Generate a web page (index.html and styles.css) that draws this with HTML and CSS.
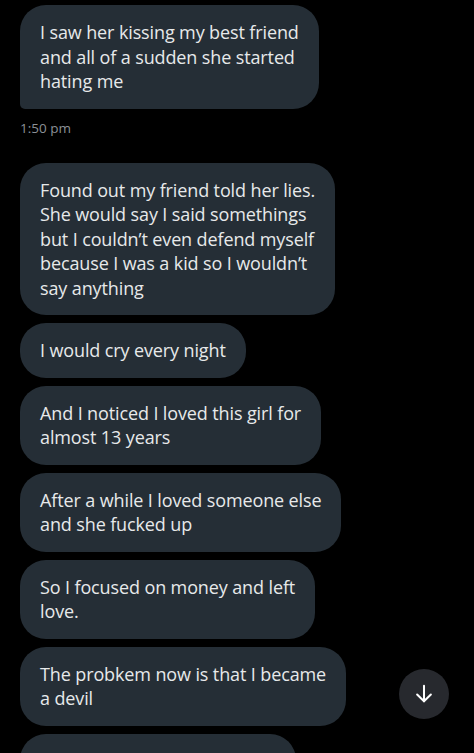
FILE: index.html
```html
<!DOCTYPE html>
<html lang="en">
<head>
    <meta charset="UTF-8">
    <meta name="viewport" content="width=device-width, initial-scale=1.0">
    <title>Messages</title>
    <link rel="stylesheet" href="styles.css">
</head>
<body>
    <div class="chat">
        <div class="group">
            <div class="bubble last">I saw her kissing my best friend<br>and all of a sudden she started<br>hating me</div>
            <div class="time">1:50 pm</div>
        </div>

        <div class="group">
            <div class="bubble">Found out my friend told her lies.<br>She would say I said somethings<br>but I couldn’t even defend myself<br>because I was a kid so I wouldn’t<br>say anything</div>
            <div class="bubble">I would cry every night</div>
            <div class="bubble">And I noticed I loved this girl for<br>almost 13 years</div>
            <div class="bubble">After a while I loved someone else<br>and she fucked up</div>
            <div class="bubble">So I focused on money and left<br>love.</div>
            <div class="bubble">The probkem now is that I became<br>a devil</div>
            <div class="bubble partial">&nbsp;<br>&nbsp;</div>
        </div>
    </div>

    <button class="scroll-down" aria-label="Scroll to bottom">
        <svg width="22" height="22" viewBox="0 0 24 24" fill="none" stroke="#fff" stroke-width="2.2" stroke-linecap="round" stroke-linejoin="round">
            <path d="M12 3v17"/>
            <path d="M4.5 12.5L12 20l7.5-7.5"/>
        </svg>
    </button>
</body>
</html>
```

FILE: styles.css
```css
:root {
    --bubble: #252e36;
    --text: #e7e9ea;
    --muted: #8b9096;
}

body {
    margin: 0;
    padding: 0;
    background: #000;
    font-family: 'Open Sans', 'Noto Sans', sans-serif;
    overflow: hidden;
    height: 753px;
}

.chat {
    padding: 5px 20px 0;
    display: flex;
    flex-direction: column;
    gap: 26px;
}

.group {
    display: flex;
    flex-direction: column;
    align-items: flex-start;
    gap: 8px;
}

.bubble {
    background: var(--bubble);
    color: var(--text);
    font-size: 18px;
    line-height: 24.5px;
    padding: 15px 20px;
    border-radius: 26px;
    letter-spacing: -0.12px;
}

.bubble.last {
    border-bottom-left-radius: 5px;
}

.bubble.partial {
    width: 236px;
}

.time {
    color: var(--muted);
    font-size: 13.5px;
    margin-top: 2px;
}

.scroll-down {
    position: fixed;
    left: 399px;
    top: 669px;
    width: 50px;
    height: 50px;
    border-radius: 50%;
    border: none;
    background: #27292e;
    display: flex;
    align-items: center;
    justify-content: center;
    padding: 0;
    cursor: pointer;
}
```
